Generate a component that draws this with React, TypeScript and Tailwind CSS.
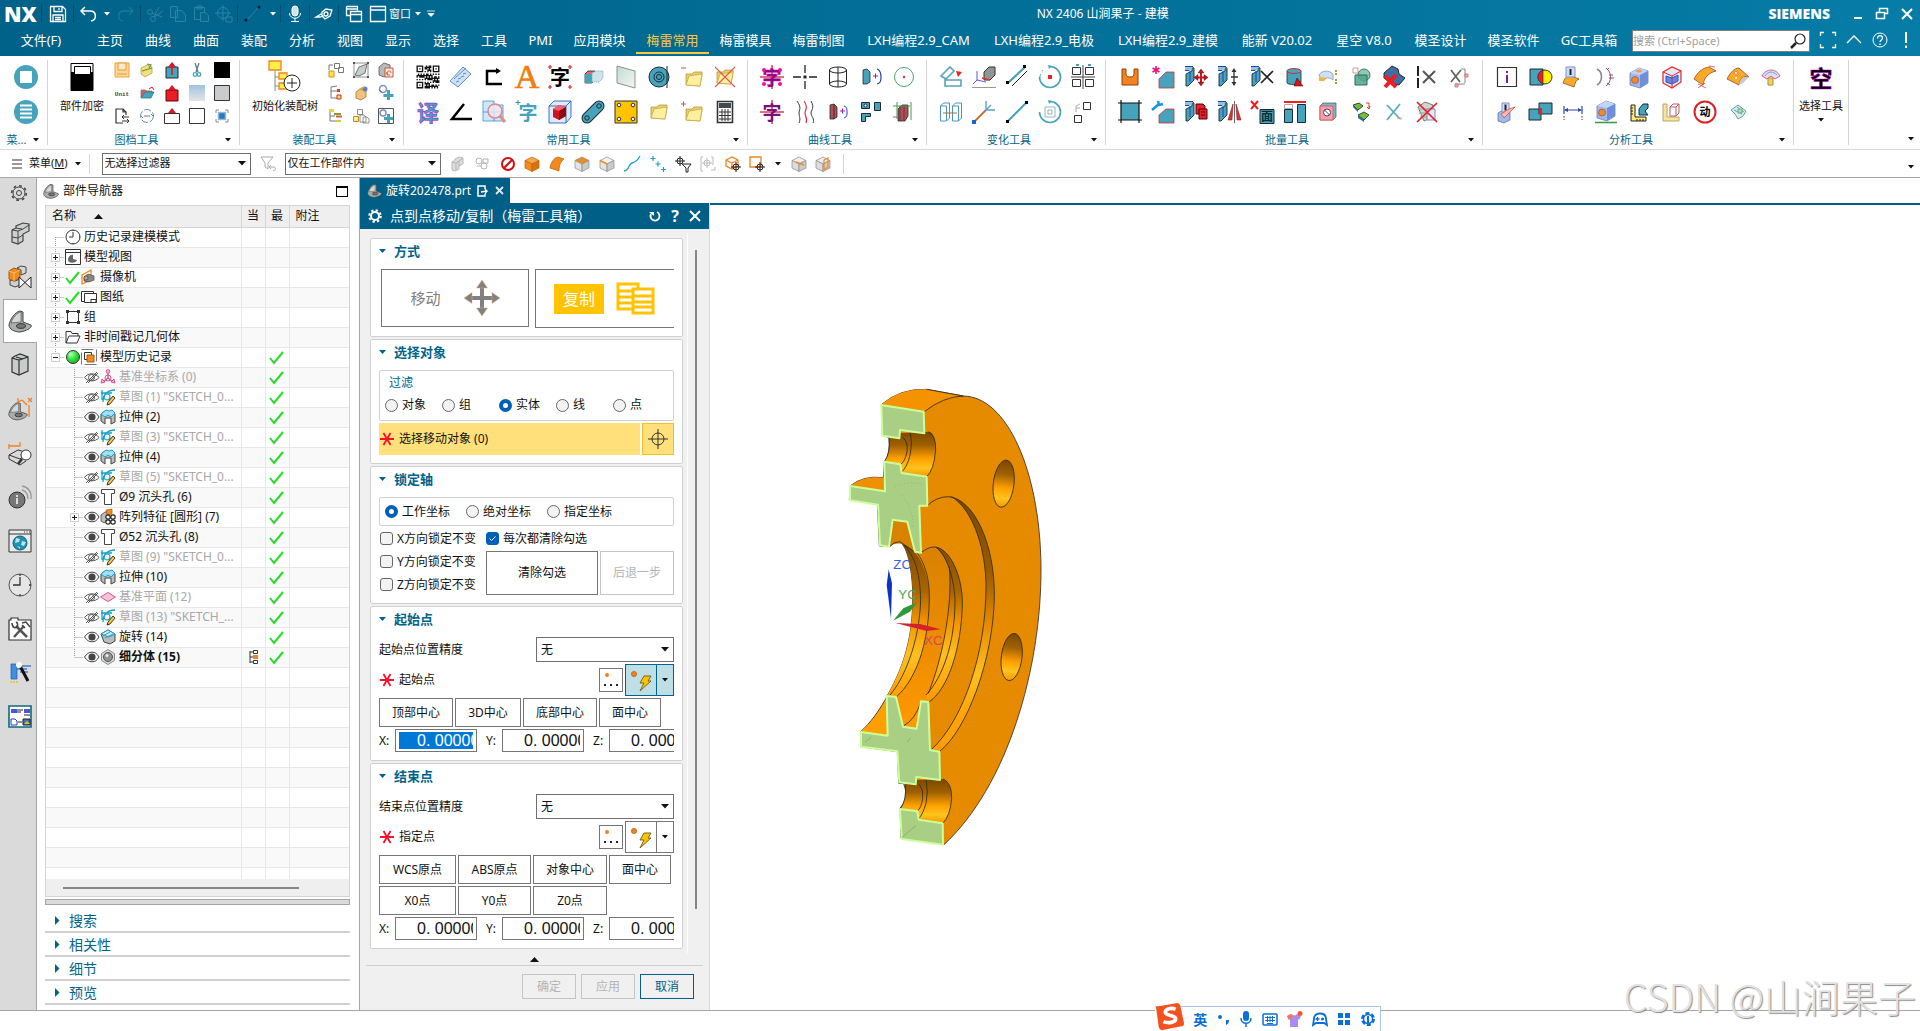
import type { ReactNode } from "react";

const TEAL = "#46a3bb";
const INK = "#1c2b33";

/* ---------- small helpers ---------- */

function Svg({ s = 24, children }: { s?: number; children: ReactNode }) {
  return (
    <svg width={s} height={s} viewBox={`0 0 ${s} ${s}`} fill="none" className="shrink-0 overflow-visible" aria-hidden="true">
      {children}
    </svg>
  );
}

function Caret({ color = "#111" }: { color?: string }) {
  return (
    <svg width="6" height="4" viewBox="0 0 6 4" className="shrink-0" aria-hidden="true">
      <path d="M0 0h6L3 3.5z" fill={color} />
    </svg>
  );
}

const T = ({ x, y, size, fill, children, stroke }: { x: number; y: number; size: number; fill: string; stroke?: string; children: string }) => (
  <text x={x} y={y} fontSize={size} fill={fill} stroke={stroke} strokeWidth={stroke ? 0.5 : undefined} fontWeight="700" textAnchor="middle" fontFamily="'Noto Sans CJK SC', sans-serif">
    {children}
  </text>
);

/* ---------- ribbon drawings ---------- */

function qrPath() {
  let d = "";
  const n = 17;
  const inFinder = (r: number, c: number) => (r < 6 && c < 6) || (r < 6 && c > 10) || (r > 10 && c < 6);
  for (let r = 0; r < n; r++)
    for (let c = 0; c < n; c++) if (!inFinder(r, c) && (r * 7 + c * 11 + r * c * 5 + ((r ^ c) & 3)) % 5 < 3) d += `M${c} ${r}h1v1h-1z`;
  for (const [x, y] of [[0, 0], [12, 0], [0, 12]]) d += `M${x} ${y}h5v5h-5zM${x + 1} ${y + 1}v3h3v-3zM${x + 2} ${y + 2}h1v1h-1z`;
  return d;
}

const folder = (x: number, y: number) => (
  <>
    <path d={`M${x} ${y + 14}V${y + 3}h6l2 -2h8v3l-2 11z`} fill="#e9cf6a" stroke="#b99a3a" strokeWidth=".8" />
    <path d={`M${x} ${y + 14}l3-9 13-2-2 12z`} fill="#fff0a0" stroke="#c9a94a" strokeWidth=".8" />
  </>
);

const block = (
  <>
    <path d="M2 9l6-3V2l2 1v12l-6 6H2z" fill={TEAL} stroke={INK} strokeWidth=".9" />
    <path d="M1 2h8L6 6H1z" fill="#8dc6d6" />
    <path d="M1 1.500h8M1 5.500h4M6 6v11" stroke="#2440b8" strokeWidth="1" />
  </>
);

const cube = (fill: string, top: string, side: string, line: string) => (
  <>
    <path d="M3 8l9-5 9 3v12l-8 5-10-3z" fill={fill} stroke={line} strokeWidth=".8" />
    <path d="M3 8l9-5 9 3-8 4z" fill={top} />
    <path d="M13 10l8-4v12l-8 5z" fill={side} />
  </>
);

const smallFile: [string, ReactNode][] = [
  ["保存", <><path d="M1 1h14v14H1z" fill="#fbd79b" stroke="#f0a030" /><path d="M4 1h8v7H4zM3 12h10" stroke="#e59a3a" fill="#fde9c4" /></>],
  ["打开", <><path d="M2 6l6-3 5 2v6l-7 4-4-3z" fill="#f3df7e" stroke="#b7a146" strokeWidth=".8" /><path d="M8 2l4 1-2 3M3 9l10-3" stroke="#5d9a3d" strokeWidth="1.2" /></>],
  ["导出", <><path d="M2 5h12v11H2z" fill={TEAL} stroke={INK} /><path d="M8 13V4" stroke="#e81123" strokeWidth="1.6" /><path d="M8 0l4 5H4z" fill="#e81123" /></>],
  ["剪切", <><path d="M6 1l3 9M10 1L7 10" stroke="#5b7083" strokeWidth="1.2" /><circle cx="6" cy="12.500" r="1.800" stroke={TEAL} strokeWidth="1.300" /><circle cx="10" cy="12.500" r="1.800" stroke={TEAL} strokeWidth="1.300" /></>],
  ["黑色", <path d="M0 0h16v16H0z" fill="#000" />],
  ["单位", <text x="8" y="10.500" fontSize="6" textAnchor="middle" fill="#444" fontWeight="700" fontFamily="'Liberation Mono', monospace">Unit</text>],
  ["打开文件夹", <><path d="M2 13V5h4l2 1h5v3" fill="#e05b4b" stroke="#6e7f88" strokeWidth=".8" /><path d="M2 13l4-6h9l-3 6z" fill={TEAL} stroke="#35788b" strokeWidth=".8" /><path d="M10 4l3-2 2 3" stroke="#e81123" /></>],
  ["红色导出", <><path d="M2 5h12v11H2z" fill="#ed1c24" stroke="#5a0a0c" /><path d="M8 0l4 5H4z" fill="#e81123" /></>],
  ["渐变背景", <path d="M0 0h16v16H0z" fill="url(#gradBg)" />],
  ["灰色背景", <path d="M.5.5h15v15H.5z" fill="#c9cbce" stroke="#333" />],
  ["移出", <><path d="M9 15H2V1h7l3 3v3M9 1v3h3" stroke="#333" strokeWidth="1.200" /><path d="M15 9H8l2-2M8 9l2 2M8 13h7l-2-2M15 13l-2 2" stroke="#333" /></>],
  ["替换", <><circle cx="8" cy="8" r="6.500" stroke="#5b8fb0" strokeDasharray="7 2" /><path d="M2 8l2 2M14 8l-2-2M5 8h6" stroke="#777" /></>],
  ["上传", <><path d="M.5 5.500h15v10H.5z" fill="#fff" stroke="#333" /><path d="M8 0l4 5H4z" fill="#e81123" /></>],
  ["白色背景", <path d="M.5.5h15v15H.5z" fill="#fff" stroke="#333" />],
  ["适合窗口", <><path d="M2 5V2h3M11 2h3v3M14 11v3h-3M5 14H2v-3" stroke="#888" /><path d="M4.500 4.500h7v7h-7z" fill="#2d79b8" stroke="#8fb7d6" strokeWidth="1.500" /></>],
];

const smallAsm: [string, ReactNode][] = [
  ["添加组件", <><path d="M6.500 1.500h5v5h-5zM10.500 5.500h5v5h-5z" stroke="#777" /><path d="M1 8V3h4" stroke="#777" /><path d="M1 9h5v6H1z" fill="#ffe34d" stroke="#e08a1a" /></>],
  ["变换组件", <><path d="M1 1h14v14H1z" stroke="#777" strokeWidth=".8" /><path d="M2 13l4-8 8-3-2 9-6 3z" fill="#c5d0cd" stroke="#555" strokeWidth=".8" /><path d="M0 0h2v2H0zM14 0h2v2h-2zM14 14h2v2h-2zM0 14h2v2H0z" fill="#555" /></>],
  ["替换组件", <><path d="M1 5l5-4 6 2v9l-6 3-5-2z" fill="#b9b9b9" stroke="#555" strokeWidth=".8" /><path d="M7 6h8v9H7z" fill="#ffe9e2" stroke="#c05a3a" /><path d="M9 12c0-4 4-4 4-1M9 10l0 3h3" stroke="#d2532a" /></>],
  ["树", <><path d="M3 2v11h6M3 6h6M3 2l6-1" stroke="#777" /><path d="M9 4h3v3H9z" fill="#e33" /><path d="M9 10h4v4H9z" fill="#ffe34d" stroke="#c33" /></>],
  ["新建父", <><path d="M3 7l4-3 6 2v6l-5 3-5-2z" fill="#f0c27c" stroke="#a47431" strokeWidth=".8" /><circle cx="12" cy="4" r="2.500" fill="#5e7fbd" /><path d="M6 5l5-3" stroke="#e8a23a" strokeWidth="1.500" /></>],
  ["加件一", <><circle cx="5" cy="4" r="3.500" stroke="#7f8fb8" strokeWidth="1.500" /><path d="M1 5l3 2" stroke="#6c5bb8" /><path d="M10.500 5v10M5.500 10.500h10" stroke={TEAL} strokeWidth="3" /></>],
  ["树二", <><path d="M2 2v11h5M2 8h5" stroke="#777" /><path d="M1 1h5v3H1z" fill="#e7d23f" /><path d="M6 5h7v2H6z" fill="#8a9a36" /><path d="M8 7.500h6v2H8z" fill="#c64" /><path d="M7 12h6v2H7z" fill="#d9c93c" /></>],
  ["复制组件", <><path d="M4.500 1.500h5v5h-5z" stroke="#888" /><path d="M.5 8.500h5v5h-5z" fill="#ffef9a" stroke="#b98b1a" /><path d="M7 7h4l2 2v5H7zM10 9h4l2 2v4h-6z" fill="#fff" stroke="#777" strokeWidth=".8" /></>],
  ["加件二", <><path d="M.5.5h15v15H.5z" stroke="#555" /><circle cx="5" cy="5" r="3" stroke="#7f8fb8" strokeWidth="1.500" /><path d="M10.500 6v9M6 10.500h9" stroke={TEAL} strokeWidth="3" /></>],
];

const common: [string, ReactNode][] = [
  ["二维码", <g transform="translate(0.500 0.500) scale(1.350)"><path d={qrPath()} fill="#111" fillRule="evenodd" /></g>],
  ["测量", <><path d="M1 16L14 2l8 7L9 22z" fill="#cfe1f5" stroke="#5b8fc9" /><path d="M5 14l12-11M7 17l3-1M9 14l3-1M12 12l3-1M14 9l3-1" stroke="#5b8fc9" /></>],
  ["路径", <><path d="M17 6H5v13h15" stroke="#000" strokeWidth="2.500" /><path d="M14 3l5 3-5 3z" fill="#000" /></>],
  ["文字", <text x="12" y="23" fontSize="34" fill="#f07d0e" stroke="#f07d0e" strokeWidth=".6" textAnchor="middle" fontFamily="'Liberation Serif', serif">A</text>],
  ["字阵", <><T x={12} y={20} size={20} fill="#000">字</T><path d="M2 0v4M0 2h4M22 0v4M20 2h4M2 20v4M0 22h4M22 20v4M20 22h4" stroke="#d8232a" strokeWidth="1.200" /></>],
  ["分割体", <><path d="M4 9l3-3h7v9l-3 3H4z" fill="#e46a6a" stroke={INK} strokeWidth=".8" /><path d="M4 9h7v9H4z" fill={TEAL} /><path d="M11 8l4-2h7v7l-4 4h-7z" fill="#cfe3ea" stroke="#7aa4b2" strokeDasharray="1 1" /></>],
  ["平面", <path d="M3 1l18 5v17L3 18z" fill="url(#gradPlane)" stroke="#8a938f" />],
  ["圆片", <><circle cx="12" cy="12" r="10" fill={TEAL} stroke={INK} /><circle cx="12" cy="12" r="5" stroke={INK} /><circle cx="12" cy="12" r="2.500" stroke={INK} /><path d="M20 1v22" stroke={INK} /></>],
  ["减文件夹", <><path d="M1 3h5" stroke="#c55" />{folder(6, 6)}</>],
  ["删除文件夹", <>{folder(4, 4)}<path d="M2 2l20 20M22 2L2 22" stroke="#e0584a" strokeWidth="1.100" /></>],
  ["翻译", <T x={12} y={21} size={22} fill="#4a9bd0" stroke="#a010b0">译</T>],
  ["角度", <path d="M15 4L3 19h20" stroke="#000" strokeWidth="2.500" />],
  ["缩放", <><path d="M1 1h11v4h9v16H1zM1 12h20M12 5v16" fill="#cfe6fb" stroke="#3a8fe0" strokeWidth=".8" /><circle cx="13" cy="11" r="7" fill="#f6e6ee" fillOpacity=".8" stroke="#d98a8a" strokeWidth="1.500" /><path d="M18 16l5 6" stroke="#e58a8a" strokeWidth="3" /></>],
  ["字加", <><T x={13} y={20} size={19} fill={TEAL}>字</T><path d="M3 0v5M.5 2.500h5" stroke="#3b8da6" /></>],
  ["包容体", <><path d="M1 6l5-5h17v16l-5 6H1zM1 6h17v17M18 6l5-5" fill="#bcd6ff" fillOpacity=".5" stroke="#2e63b8" strokeWidth=".9" /><path d="M5 9l6-4 7 2v9l-7 4-6-3z" fill="#d3121f" /><path d="M5 9l6-4 7 2-7 4z" fill="#f0626b" /><path d="M11 11l7-4v9l-7 4z" fill="#8d0912" /></>],
  ["连杆", <><path d="M6 18L18 6" stroke={INK} strokeWidth="11" strokeLinecap="round" /><path d="M6 18L18 6" stroke={TEAL} strokeWidth="9" strokeLinecap="round" /><circle cx="18" cy="6" r="2.200" stroke={INK} /><circle cx="6" cy="18" r="2.200" stroke={INK} /></>],
  ["模板", <><path d="M1 1h22v22H1z" fill="#ffc300" stroke="#333" /><g fill="#fff" stroke="#333"><circle cx="5" cy="5" r="1.800" /><circle cx="19" cy="5" r="1.800" /><circle cx="5" cy="19" r="1.800" /><circle cx="19" cy="19" r="1.800" /></g></>],
  ["文件夹", folder(4, 4)],
  ["加文件夹", <><path d="M1 4h5M3.500 1.500v5" stroke="#c55" />{folder(6, 6)}</>],
  ["计算器", <><path d="M4.500 1.500h15v21h-15z" fill="#fff" stroke="#333" strokeWidth="1.600" /><path d="M6 3h12v5H6z" fill="#3d4b52" /><path d="M6 12h12M6 15.500h12M6 19h12M9 9v12M12 9v12M15 9v12" stroke="#333" /></>],
];

const curve: [string, ReactNode][] = [
  ["字曲线", <><path d="M0 12h24M12 0v24" stroke="#d8434a" strokeWidth="1.500" /><T x={12} y={20} size={19} fill="#7a1080" stroke="#e000b0">字</T><g fill="#f0109a"><circle cx="4" cy="5" r="2" /><circle cx="20" cy="5" r="2" /><circle cx="4" cy="19" r="2" /><circle cx="20" cy="19" r="2" /></g></>],
  ["中心线", <><path d="M0 12h8M16 12h8M12 0v8M12 16v8" stroke="#222" strokeWidth="1.300" /><path d="M10.500 10.500h3v3h-3z" fill="#222" /></>],
  ["圆柱线", <><ellipse cx="12" cy="5" rx="8.500" ry="3" stroke="#222" /><ellipse cx="12" cy="19" rx="8.500" ry="3" stroke="#222" /><path d="M3.500 5v14M20.500 5v14M12 2v20" stroke="#222" /></>],
  ["投影", <><path d="M4 5l4-1 3 3v10l-3 2H4z" fill={TEAL} stroke={INK} strokeWidth=".8" /><path d="M14 11h5M16.500 8.500v5" stroke="#a020a0" /><path d="M18 4c3 1 4 3 4 8s-1 6-4 7" stroke="#223fb0" strokeWidth="1.200" /></>],
  ["圆心", <><circle cx="12" cy="12" r="9.500" stroke="#4ca56a" /><circle cx="12" cy="12" r="1.200" fill="#d33" /></>],
  ["字线", <><path d="M0 12h24M12 0v24" stroke="#d8434a" strokeWidth="1.500" /><T x={12} y={20} size={19} fill="#7a1080">字</T></>],
  ["偏置曲线", <><path d="M4 1c5 7 2 9 2 12s2 6 0 10M18 1c4 7 0 9 0 12s4 6 2 10" stroke="#333" /><path d="M11 1c5 7 1 9 1 12s3 6 1 10" stroke="#e0303a" strokeWidth="1.200" /></>],
  ["抽取", <><path d="M4 5l4-1 3 3v10l-3 2H4z" fill="#b84c56" stroke={INK} strokeWidth=".8" /><path d="M8 4v15" stroke="#333" /><path d="M14 11h5M16.500 8.500v5" stroke="#a020a0" /><path d="M18 6c3 1 3 3 3 6s0 5-3 6" stroke="#223fb0" /></>],
  ["排布", <g fill={TEAL} stroke={INK}><path d="M2.500 2.500h8v6h-8zM15.500 2.500h6v8h-6zM2.500 13.500h9v3h-5v5h-4z" /><circle cx="6.500" cy="5.500" r="1.500" fill="#fff" /></g>],
  ["包络", <><path d="M6 9l4-4h6v11l-3 5H6z" fill="#b84c56" stroke={INK} strokeWidth=".8" /><path d="M8 6v15M12 5v15" stroke="#444" /><path d="M1 6h17M5 2v17M19 2v18M1 17h4" stroke="#3f9a4a" /></>],
];

const change: [string, ReactNode][] = [
  ["旋转对齐", <><path d="M2 11l9-9 4 4-8 8zM6 21v-6h16v6z" fill="#fff" stroke="#5aa3b8" strokeWidth="1.600" /><path d="M17 6l6 1-4 5z" fill="#e22" /></>],
  ["坐标移动", <><path d="M12 7l5-5h6v8l-5 5h-6z" fill="#8f9693" stroke="#333" /><path d="M5 6v9l9 2M5 15l-4 4" stroke="#5b5bd8" /><path d="M10 13l8 2" stroke="#d33" strokeWidth="1.500" /><path d="M0 22.500h24" stroke="#999" /></>],
  ["平行线", <><path d="M3 18L20 2" stroke="#111" strokeWidth="1.300" /><path d="M3 18L20 2" stroke={TEAL} strokeWidth="2" /><path d="M7 21L22 6" stroke="#222" /><path d="M1 16h3v3H1zM18 0h3v3h-3z" fill="#000" /></>],
  ["旋转", <><path d="M12 1.500A10.500 10.500 0 1 1 1.500 12" stroke={TEAL} strokeWidth="1.600" /><path d="M2 12A10.500 10.500 0 0 1 5 5" stroke={TEAL} strokeDasharray="3 3" /><path d="M10 0l4 1-3 3z" fill={TEAL} /><path d="M10 10h4v4h-4z" fill="#e22" /></>],
  ["阵列", <><path d="M12 0v24M0 12h24" stroke="#444" /><g stroke="#333" fill="#fff"><path d="M1.500 2.500h8v7h-8zM14.500 2.500h8v7h-8zM1.500 14.500h8v7h-8zM14.500 14.500h8v7h-8z" /></g><path d="M5 0h3M17 0h3" stroke={TEAL} strokeWidth="2" /></>],
  ["平移体", <><path d="M1.500 6l3-3h6v15l-3 3h-6zM13.500 6l3-3h6v15l-3 3h-6zM1.500 6h6v15M13.500 6h6v15" fill="#fff" stroke="#4a93c4" /><path d="M4 13h14" stroke="#a86a3a" /></>],
  ["点到点", <><path d="M2 22L14 10" stroke="#c0712a" strokeWidth="1.800" /><path d="M14 10V1M14 10h9M14 10l5-5" stroke="#5aa3d0" strokeWidth="1.400" /><path d="M0 20h4v4H0z" fill="#1464d8" /></>],
  ["两点线", <><path d="M3 21L21 3" stroke={TEAL} strokeWidth="2" /><path d="M1 20h3v3H1zM20 1h3v3h-3z" fill="#000" /></>],
  ["旋转框", <><path d="M12 1.500A10.500 10.500 0 1 1 1.500 12" stroke={TEAL} strokeWidth="1.600" /><path d="M10 0l4 1-3 3z" fill={TEAL} /><path d="M7 7h10v10H7z" stroke="#8fb9c6" /><path d="M10 10h4v4h-4z" stroke="#aaa" /></>],
  ["缩放移动", <><path d="M12.500 2.500h7v7h-7zM3.500 15.500h7v7h-7z" stroke="#333" fill="#fff" /><path d="M5 12V6l4-2M5 8l4 0" stroke="#aaa" /></>],
];

const batch: [string, ReactNode][] = [
  ["凹槽", <path d="M4 4h4v5c0 4 8 4 8 0V4h4v16H4z" fill="#f58220" stroke="#8a4208" />],
  ["倒角星", <><path d="M8 23V14l7-7h8v16z" fill={TEAL} stroke="#c33" strokeWidth=".8" /><path d="M5 1v8M1.500 3l7 4M8.500 3l-7 4" stroke="#f0107a" strokeWidth="1.600" /></>],
  ["移动面", <>{block}<path d="M17 6v13M11 12.500h12" stroke="#c21820" strokeWidth="2" /><path d="M17 4l3 4h-6zM17 21l3-4h-6zM10 12.500l4-3v6zM24 12.500l-4-3v6z" fill="#c21820" stroke="#500" strokeWidth=".4" /></>],
  ["拉伸面", <>{block}<path d="M17 5v15M14 12h7" stroke="#333" strokeWidth="1.300" /><path d="M17 3l2.500 4h-5zM17 21l2.500-4h-5z" fill="#333" /></>],
  ["删除面", <>{block}<path d="M11 6l12 12M23 6L11 18" stroke="#222" strokeWidth="1.700" /></>],
  ["缸体", <><path d="M4 6v12c2 2 10 2 14 0V6z" fill={TEAL} stroke={INK} strokeWidth=".8" /><ellipse cx="11" cy="6" rx="7" ry="2.500" fill={TEAL} stroke="#c33" /><path d="M14 13l6 8h-9z" fill="#d8121c" stroke="#400" strokeWidth=".5" /></>],
  ["弯曲", <><path d="M3 10c3-5 10-5 14-1v6c-4-3-7-3-11 1z" fill="#cfe0f2" stroke="#93a9c4" /><path d="M3 12v4h5l3-3" fill="#f0b347" /><path d="M20 5v5M20 14v5" stroke="#d88a3a" strokeWidth="2" strokeDasharray="2 1" /></>],
  ["布尔", <><path d="M4 3h5v5H4z" stroke="#d99" /><circle cx="15" cy="10" r="6" fill="#8fc9b0" stroke="#3a7a6a" /><path d="M6 10h12v10H6z" fill="#4ea38e" fillOpacity=".85" stroke="#2f6a5a" /></>],
  ["删除体", <><path d="M2 8l8-7 6 3 1 5 6 4-6 7-9-2-6-5z" fill="#3f6f9e" stroke="#182a3c" /><path d="M3 11l11 11M14 10L3 22" stroke="#ef1c24" strokeWidth="4" /></>],
  ["对称", <><path d="M3 1v22" stroke="#222" strokeWidth="2" strokeDasharray="10 2" /><path d="M8 6l12 12M20 6L8 18" stroke="#555" strokeWidth="2" /></>],
  ["复制阵列", <><path d="M3 5l9 12M13 5L3 17" stroke="#666" strokeWidth="1.800" /><path d="M13 4h4v14M7 19h10" stroke="#888" /><path d="M17 9h3v3h-3zM7 19h3v3H7z" fill="#f3b0b0" stroke="#d55" strokeWidth=".7" /></>],
  ["外框", <><path d="M3 3h18v17H3z" fill={TEAL} /><path d="M3 0v23M21 0v23M0 3h24M0 20h24" stroke="#111" strokeWidth="1.200" /></>],
  ["倒角修", <><path d="M8 23V15l7-6h8v14z" fill={TEAL} stroke="#c33" strokeWidth=".8" /><path d="M1 10l7-6M7 1l1 4 4-1" stroke="#1496e0" strokeWidth="2.500" /></>],
  ["面复制", <>{block}<path d="M12 4h7l2 2v8h-9z" fill="#e2222c" stroke="#500" /><path d="M15 9h8v10h-8z" fill="#e2222c" stroke="#500" /><path d="M17 12h4M17 15h4" stroke="#500" /></>],
  ["面镜像", <>{block}<path d="M16 4l-5 16h4zM19 4l5 16h-4z" fill="#d23a42" stroke="#700" strokeWidth=".5" /><path d="M17.500 1v22" stroke="#666" /></>],
  ["删面", <><path d="M1 1l7 8M8 1L1 9" stroke="#ef1c24" strokeWidth="2" /><path d="M10 9.500h14v14H10z" fill={TEAL} stroke={INK} /><T x={17} y={21} size={12} fill="#0a2a33">面</T></>],
  ["对齐面", <><path d="M1 2h22" stroke="#e22" strokeWidth="2" /><path d="M1.500 9.500h8v13h-8zM14.500 4.500h8v18h-8z" fill={TEAL} stroke={INK} /><path d="M1.500 4.500h8v4h-8z" stroke="#aaa" fill="#fff" /></>],
  ["面孔", <><path d="M4 6l3-3h13v14l-3 3H4z" fill="#7fb6c6" stroke="#555" strokeWidth=".7" /><path d="M4 6h13v14H4z" fill="#f6a0aa" stroke="#c55" strokeWidth=".8" /><circle cx="11" cy="12.500" r="3.500" fill="#fff" stroke="#446" /><path d="M8.500 10l5 5" stroke="#446" /></>],
  ["替换体", <><path d="M4 5l6-2 4 3-5 4zM9 15l6-3 5 3-5 5z" fill="#6fbf3a" stroke="#222" strokeWidth=".8" /><path d="M4 5l5 5v2L4 7zM9 15l6 5v2l-6-4z" fill="#2f6a9a" /><path d="M17 3h3v5M18 7l2 2 1-3" stroke="#e33" /></>],
  ["交叉", <><path d="M5 5l13 14M18 4L5 20" stroke="#5aaac0" strokeWidth="1.800" /><path d="M15 18h3M19 17v3" stroke="#d99" /></>],
  ["清除", <><path d="M3 7l7-5 8 3v12l-9 4z" fill="#cfd5d3" stroke="#777" /><path d="M4 9h13M4 13h13M5 17h11" stroke="#8a9" /><path d="M12 9h8v11h-8z" fill="#e6e6ff" stroke="#88a" /><path d="M2 2l20 20M22 3L2 22" stroke="#e81c24" strokeWidth="1.700" /></>],
];

const blueCube = cube("#9fb8f0", "#c3d4fb", "#6f8fdc", "#6f7fa8");
const analysis: [string, ReactNode][] = [
  ["信息", <><path d="M2.500 2.500h19v19h-19z" fill="#fff" stroke="#333" strokeWidth="1.200" /><path d="M12 10v8M12 6v2" stroke="#7a1fa0" strokeWidth="2" /></>],
  ["干涉", <><path d="M2 4h13v16H2z" fill={TEAL} stroke={INK} /><circle cx="17" cy="12" r="7" fill="#fff200" stroke="#333" /><path d="M15 5.300a7 7 0 0 0 0 13.400z" fill="#ef1c24" stroke="#333" strokeWidth=".7" /></>],
  ["面信息", <><path d="M2 18c2-6 5-8 8-7l8 3c-3 1-4 4-5 8z" fill="#f9a928" stroke="#a86c2c" /><path d="M5 2h9v10H5z" fill="#cfdcf6" stroke="#7f93c4" /><path d="M9.500 4v6" stroke="#223" strokeWidth="2" /></>],
  ["曲率梳", <><path d="M3 4c6 3 6 12 0 16" stroke="#888" strokeWidth="1.600" /><path d="M12 3c6 4 6 14 0 18" stroke="#e0434a" /><path d="M13 5l2-2M15 10h4M15 13h5M13 18l3 2" stroke="#46a" /></>],
  ["体孔", <>{blueCube}<circle cx="8" cy="15" r="3.500" fill="#f08a28" stroke="#8a5a4a" strokeWidth=".7" /><ellipse cx="12" cy="6" rx="3" ry="1.500" fill="#f0a050" /></>],
  ["线框", <><path d="M3 7l9-5 9 4v11l-9 6-9-5z" fill="#dfeaff" stroke="#e22" strokeWidth="1.200" /><path d="M6 11l6 2 6-3v6l-6 3-6-2z" fill="#5b8be8" stroke="#2457c8" /><path d="M12 11v11M3 7l9 4 9-5" stroke="#e22" /></>],
  ["曲面", <><path d="M1 14C4 8 9 3 16 2l7 4C15 8 11 13 10 20z" fill="#f9a928" stroke="#9a5a3a" strokeWidth=".9" /><path d="M5 19l8 4M12 18l-7 5M16 1l6 1" stroke="#c44" strokeWidth=".8" /></>],
  ["曲面点", <><path d="M1 14C4 8 8 3 13 3l10 9c-6-2-9 2-10 8z" fill="#f9a928" stroke="#9a5a3a" strokeWidth=".9" /><path d="M13 20c1-6 4-9 10-8l-6 6z" fill="#c9c9c9" /><circle cx="10" cy="8" r="1.500" fill="#fff" stroke="#a55" strokeWidth=".6" /><circle cx="10" cy="13" r="1" fill="#fff" /></>],
  ["扇面", <><path d="M3 11c4-8 14-8 18 0l-5 3-4-3-4 3z" fill="#e8d9ec" stroke="#b48" strokeWidth=".8" /><path d="M6 11c3-5 8-5 12-1" stroke="#5bb0d8" /><path d="M9 13h5v7H9z" fill="#f0d060" stroke="#b09030" /></>],
  ["体信息", <><path d="M3 13l5-3 7 2v8l-6 3-6-2z" fill="#9fb8f0" stroke="#667" strokeWidth=".7" /><path d="M7 3h7v9H7z" fill="#cfdcf6" stroke="#7f93c4" /><path d="M10.500 4.500v6" stroke="#223" strokeWidth="2" /><path d="M6 14l3 4 11-11-6 2z" fill="#f3b8b0" stroke="#c43" strokeWidth=".7" /></>],
  ["求差", <><path d="M11 3h13v11H11zM1 9h12v11H1z" fill={TEAL} stroke={INK} /><path d="M11 8h3v7h-3z" fill="#ef1c24" /></>],
  ["距离", <><path d="M3 6v8M21 6v8M4 10h16" stroke="#2f49a8" strokeWidth="1.200" /><path d="M3 10l4-2v4zM21 10l-4-2v4z" fill="#2f49a8" /><path d="M3 16v4M21 16v4" stroke="#d55" strokeDasharray="1.500 1.500" strokeWidth="1.500" /></>],
  ["体尺寸", <><g transform="translate(0 -2)">{blueCube}</g><circle cx="8" cy="12.500" r="3.500" fill="#f08a28" stroke="#8a5a4a" strokeWidth=".7" /><path d="M1 22.500h22" stroke="#3f9a4a" strokeWidth="1.600" /></>],
  ["标尺", <><path d="M4 5v16h15v-4H8V5z" fill="#ffe97a" stroke="#222" /><path d="M12 15V9l4-5h5v4l-3 3 3 4z" fill={TEAL} stroke={INK} /><path d="M4 8h2M4 11h2M4 14h2M10 21v-2M13 21v-2M16 21v-2" stroke="#222" /></>],
  ["标尺二", <><path d="M3 4v17h16v-4H7V4z" fill="#f4e4a0" stroke="#b8a560" /><path d="M10 7l3-3h6v9l-3 3h-6zM10 7h6v9M16 7l3-3" stroke="#b55a6a" /></>],
  ["动态", <><circle cx="12" cy="12" r="10.500" fill="#fff" stroke="#e02028" strokeWidth="2" /><T x={12} y={16} size={11} fill="#000">动</T></>],
  ["检查", <><path d="M5 10l7-5 8 6-3 5-5 3-3-5z" fill="#d8efe8" stroke="#5aa3b8" /><path d="M8 10l8 4M11 7l7 5" stroke="#5aa3b8" /><path d="M12 9h4v4h-4z" fill="#b9dca0" stroke="#6a8" /></>],
];

function IconGrid({ items, cls, s = 24 }: { items: [string, ReactNode][]; cls: string; s?: number }) {
  return (
    <div className={`grid ${cls}`}>
      {items.map(([name, art]) => (
        <button key={name} aria-label={name} className="flex items-center justify-center">
          <Svg s={s}>{art}</Svg>
        </button>
      ))}
    </div>
  );
}

function Group({ label, children, cls }: { label: string; children: ReactNode; cls: string }) {
  return (
    <section className="my-1 flex flex-col border-r border-[#d4d4d4]">
      <div className={`flex flex-1 ${cls}`}>{children}</div>
      <div className="-mb-[3px] flex h-4 items-center text-[11px] leading-4 text-[#00648a]">
        <span className="flex-1 text-center whitespace-nowrap">{label}</span>
        <button aria-label={`${label}选项`} className="pr-2"><Caret /></button>
      </div>
    </section>
  );
}

/* ---------- header ---------- */

const tabs: [string, string][] = [
  ["主页", "w-12"], ["曲线", "w-12"], ["曲面", "w-12"], ["装配", "w-12"], ["分析", "w-12"], ["视图", "w-12"], ["显示", "w-12"], ["选择", "w-12"], ["工具", "w-12"],
  ["PMI", "w-[45px]"], ["应用模块", "w-[73px]"], ["梅雷常用", "w-[73px]"], ["梅雷模具", "w-[73px]"], ["梅雷制图", "w-[73px]"],
  ["LXH编程2.9_CAM", "w-[127px]"], ["LXH编程2.9_电极", "w-[124px]"], ["LXH编程2.9_建模", "w-[124px]"], ["能新 V20.02", "w-[94px]"], ["星空 V8.0", "w-20"],
  ["模圣设计", "w-[73px]"], ["模圣软件", "w-[73px]"], ["GC工具箱", "w-[78px]"],
];

function QSep() {
  return <span className="h-[18px] w-px shrink-0 bg-[#004c6b]" />;
}

function QBtn({ label, children, cls }: { label: string; children: ReactNode; cls: string }) {
  return <button aria-label={label} className={`flex h-6 shrink-0 items-center justify-center ${cls}`}>{children}</button>;
}

function Header() {
  const dim = "#2f83a2";
  return (
    <header className="bg-linear-to-r from-[#006289] to-[#067ca6] text-white">
      <div className="flex h-7 items-center">
        <div className="flex h-7 items-center">
          <span className="w-[41px] pl-1 font-['Open_Sans',sans-serif] text-[21px] leading-7 font-extrabold">NX</span>
          <QSep />
          <QBtn label="保存" cls="w-[31px]"><Svg s={18}><path d="M1.500 1.500h12l3 3v12h-15zM5 1.500v5h8v-5M4 16v-6h10v6M6 12.500h6M6 14.500h6M10 3v2" stroke="#fff" strokeWidth="1.300" /></Svg></QBtn>
          <QSep />
          <QBtn label="撤销" cls="w-7"><Svg s={18}><path d="M6 2L2 6l4 4M2 6h9c7 0 7 9 1 10" stroke="#fff" strokeWidth="1.500" /></Svg></QBtn>
          <QBtn label="撤销列表" cls="w-2.5"><Caret color="#fff" /></QBtn>
          <QBtn label="重做" cls="w-7"><Svg s={18}><path d="M12 2l4 4-4 4M16 6H7c-7 0-7 9-1 10" stroke="#1f7897" strokeWidth="1.300" /></Svg></QBtn>
          <QSep />
          <QBtn label="剪切" cls="w-7"><Svg s={18}><circle cx="4" cy="7" r="2.500" stroke={dim} /><circle cx="7" cy="14" r="2.500" stroke={dim} /><path d="M6 8l10 4M8 12l5-10M8 12l9-6" stroke={dim} /></Svg></QBtn>
          <QBtn label="复制" cls="w-[18px]"><Svg s={18}><path d="M1.500 1.500h7v11h-7zM6.500 5.500h6l4 4v7h-10z" stroke={dim} fill="#05688d" /></Svg></QBtn>
          <QBtn label="粘贴" cls="w-7"><Svg s={18}><path d="M2.500 2.500h10v12h-10zM5 1h5v3H5z" stroke={dim} /><path d="M8.500 7.500h5l3 3v6h-8z" stroke={dim} fill="#05688d" /></Svg></QBtn>
          <QBtn label="选择" cls="mr-1 w-[18px]"><Svg s={18}><circle cx="8" cy="8" r="5.500" stroke={dim} /><path d="M8 0v16M0 8h16M11 12h6v5h-6z" stroke={dim} /></Svg></QBtn>
          <QSep />
          <QBtn label="直线" cls="w-7"><Svg s={18}><path d="M3 16L16 2" stroke={dim} /><circle cx="3" cy="15" r="1.500" fill="#012" /><circle cx="16" cy="2" r="1.500" fill="#012" /></Svg></QBtn>
          <QBtn label="直线列表" cls="w-3.5"><Caret color="#fff" /></QBtn>
          <QSep />
          <QBtn label="语音" cls="w-7"><Svg s={18}><rect x="6" y="1" width="6" height="10" rx="3" fill="#cfe3ea" stroke="#fff" /><path d="M3.500 8c0 7 11 7 11 0M9 13v3M5 16.500h8" stroke="#fff" /></Svg></QBtn>
          <QSep />
          <QBtn label="触控" cls="w-7"><Svg s={18}><path d="M1 12l5-3 2 2-3 1zM7 7l4-3 6 1-2 6-5 3-3-3z" stroke="#fff" strokeWidth="1.300" /><circle cx="11" cy="9" r="2" stroke="#fff" strokeWidth="1.300" /></Svg></QBtn>
          <QSep />
          <QBtn label="切换窗口" cls="w-[30px]"><Svg s={18}><path d="M1.500 1.500h11v4M1.500 1.500v9h4M1.500 4h11M5.500 6.500h11v10h-11zM5.500 9.500h11" stroke="#fff" strokeWidth="1.300" /></Svg></QBtn>
          <QBtn label="窗口" cls="gap-0.5"><Svg s={18}><path d="M1.500 1.500h15v15h-15zM1.500 5h15" stroke="#fff" strokeWidth="1.300" /></Svg><span className="mr-0.5 text-[11px]">窗口</span><Caret color="#fff" /></QBtn>
          <QBtn label="自定义" cls="w-5"><svg width="8" height="8" viewBox="0 0 8 8"><path d="M0 1h8M1 3.500h6l-3 3z" stroke="#fff" fill="#fff" strokeWidth=".8" /></svg></QBtn>
        </div>
        <h1 className="flex-1 pr-1 text-center text-xs whitespace-nowrap">NX 2406 山涧果子 - 建模</h1>
        <div className="flex items-center justify-end">
          <span className="mr-4 font-['Open_Sans',sans-serif] text-sm font-extrabold">SIEMENS</span>
          <QBtn label="最小化" cls="w-6"><Svg s={12}><path d="M2 10h8" stroke="#fff" strokeWidth="2" /></Svg></QBtn>
          <QBtn label="还原" cls="w-6"><Svg s={12}><path d="M3.500 3.500v-3h8v5h-3M.5 4.500h8v6h-8z" stroke="#fff" strokeWidth="1.500" /></Svg></QBtn>
          <QBtn label="关闭" cls="w-[26px]"><Svg s={12}><path d="M1 1l10 10M11 1L1 11" stroke="#fff" strokeWidth="2" /></Svg></QBtn>
        </div>
      </div>
      <nav className="flex h-7 text-[13px] leading-6 whitespace-nowrap">
        <a href="#file" className="mr-1 w-[82px] text-center">文件(F)</a>
        {tabs.map(([t, w]) => (
          <a key={t} href="#tab" className={t === "梅雷常用" ? "mb-0.5 w-[73px] shrink-0 border-b-2 border-[#ffc83d] text-center text-[#ffc83d]" : `${w} shrink-0 text-center`}>{t}</a>
        ))}
        <div className="ml-1 flex flex-1 items-center pb-1">
          <div className="mt-0.5 flex h-[22px] w-[178px] items-center border border-[#7d7d7d] bg-white pr-0.5">
            <input aria-label="搜索" placeholder="搜索 (Ctrl+Space)" className="w-0 flex-1 text-[11px] text-[#111] outline-none placeholder:text-[#a0a0a0]" />
            <Svg s={18}><circle cx="11" cy="7" r="5" stroke="#222" strokeWidth="1.200" /><path d="M7 11l-5 5" stroke="#222" strokeWidth="2.500" /></Svg>
          </div>
          <div className="flex flex-1 items-center justify-between pr-1.5 pl-2.5">
            <button aria-label="全屏"><Svg s={16}><path d="M.5 4V.5H4M12 .5h3.500V4M15.500 12v3.500H12M4 15.500H.5V12" stroke="#fff" strokeWidth="1.300" /></Svg></button>
            <button aria-label="收起功能区"><Svg s={16}><path d="M1 11l7-7 7 7" stroke="#fff" strokeWidth="1.300" /></Svg></button>
            <button aria-label="帮助"><Svg s={16}><circle cx="8" cy="8" r="7" stroke="#fff" /><path d="M5.500 6.500c0-4 5-3.500 5-.5 0 2-2.500 2-2.500 4M8 11.500v1.500" stroke="#fff" strokeWidth="1.300" /></Svg></button>
            <button aria-label="通知"><Svg s={16}><path d="M8 0v11M8 13.500V16" stroke="#fff" strokeWidth="2" /></Svg></button>
          </div>
        </div>
      </nav>
    </header>
  );
}

function Ribbon() {
  return (
    <div className="flex h-[94px] border-b border-[#d8d8d8] bg-white">
      <Group label="菜..." cls="w-[47px] justify-center pl-1">
        <div className="-mt-px flex flex-col items-center">
          <button aria-label="停止" className="flex h-[35px] items-center"><Svg><circle cx="12" cy="12" r="12" fill={TEAL} /><path d="M6 6h12v12H6z" fill="#fff" /></Svg></button>
          <button aria-label="列表" className="flex h-[35px] items-center"><Svg><circle cx="12" cy="12" r="12" fill={TEAL} /><path d="M6 5.500h12M6 9.500h12M6 13.500h12M6 17.500h12" stroke="#fff" strokeWidth="2" /></Svg></button>
        </div>
      </Group>
      <Group label="图档工具" cls="pl-3">
        <button className="mr-[5px] flex w-11 flex-col items-center gap-1.5 self-start pt-0.5">
          <svg width="26" height="30" viewBox="0 0 26 30"><path d="M2 1.500h22v27H2z" fill="#fff" stroke="#000" /><path d="M2 10h22v19H2z" fill="#000" /><path d="M5.500 4.500h16v8h-16z" fill="#fff" stroke="#000" /></svg>
          <span className="text-[11px] leading-4 whitespace-nowrap">部件加密</span>
        </button>
        <IconGrid items={smallFile} s={16} cls="mr-[5px] -mt-0.5 auto-rows-[23px] grid-cols-[repeat(5,25px)]" />
      </Group>
      <Group label="装配工具" cls="pl-3">
        <button className="mr-[5px] flex w-[66px] flex-col items-center gap-1 self-start">
          <Svg s={34}><path d="M1 1h12v9H1z" fill="#fff04a" stroke="#f0821e" strokeWidth="1.300" /><path d="M7 11v20M7 17h5M7 26h5" stroke="#888" /><path d="M11 13h8v6h-8zM11 23h8v6h-8z" fill="#fff04a" stroke="#f0821e" strokeWidth="1.300" /><circle cx="24" cy="23" r="8" fill="#fff" stroke="#222" /><path d="M24 18v10M19 23h10" stroke="#222" /></Svg>
          <span className="text-[11px] leading-4 whitespace-nowrap">初始化装配树</span>
        </button>
        <IconGrid items={smallAsm} s={16} cls="mr-[5px] -mt-0.5 auto-rows-[23px] grid-cols-[repeat(3,25px)]" />
      </Group>
      <Group label="常用工具" cls="pl-[7px]"><IconGrid items={common} cls="-mt-px mr-1.5 auto-rows-[35px] grid-cols-[repeat(10,33px)]" /></Group>
      <Group label="曲线工具" cls="pl-[7px]"><IconGrid items={curve} cls="-mt-px mr-1.5 auto-rows-[35px] grid-cols-[repeat(5,33px)]" /></Group>
      <Group label="变化工具" cls="pl-[7px]"><IconGrid items={change} cls="-mt-px mr-1.5 auto-rows-[35px] grid-cols-[repeat(5,33px)]" /></Group>
      <Group label="批量工具" cls="pl-[7px]"><IconGrid items={batch} cls="-mt-px mr-1.5 auto-rows-[35px] grid-cols-[repeat(11,33px)]" /></Group>
      <Group label="分析工具" cls="pl-[7px]"><IconGrid items={analysis} cls="-mt-px mr-1.5 auto-rows-[35px] grid-cols-[repeat(9,33px)]" /></Group>
      <div className="my-1 flex w-[55px] justify-center border-r border-[#d4d4d4]">
        <button className="flex flex-col items-center self-start pt-1.5">
          <Svg><T x={12} y={21} size={23} fill="#000" stroke="#c400d4">空</T></Svg>
          <span className="mt-2 mb-1 text-[11px] leading-4 whitespace-nowrap">选择工具</span>
          <Caret />
        </button>
      </div>
      <button aria-label="功能区选项" className="ml-auto self-end pr-1.5 pb-2"><Caret /></button>
    </div>
  );
}

/* ---------- selection bar ---------- */

const miniCube = (a: string, b: string, c: string, line = "#8a8a8a") => (
  <g stroke={line} strokeWidth=".7"><path d="M1 4.500L8 1l7 3.500-7 3.500z" fill={a} /><path d="M1 4.500L8 8v7.500L1 12z" fill={b} /><path d="M15 4.500L8 8v7.500l7-3.500z" fill={c} /></g>
);

const target = (x: number, y: number, c = "#222") => <g stroke={c}><circle cx={x} cy={y} r="3" /><path d={`M${x - 5} ${y}h10M${x} ${y - 5}v10`} /></g>;

const selIcons: [string, string, ReactNode][] = [
  ["选择体", "w-7", <g fill="#ddd" stroke="#aaa" strokeWidth=".8"><path d="M3 6l3-2V3l4-2 4 1v6l-4 2v3l-4 2-3-1z" /><path d="M3 6l4 1 3-2 4-3M7 7v7M10 5v5" /></g>],
  ["选择链", "w-[25px]", <g stroke="#b4b4b4"><circle cx="4" cy="5" r="3" /><circle cx="9" cy="10" r="3" /><path d="M8 3h5v4H8zM2 10h4" /></g>],
  ["重置过滤", "w-6", <><circle cx="8" cy="8" r="6" stroke="#d40f14" strokeWidth="2" /><path d="M12 4l-8 8" stroke="#d40f14" strokeWidth="2" /></>],
  ["体", "w-[25px]", miniCube("#f9a64a", "#f28a1c", "#d9730c", "#b8660f")],
  ["面", "w-[25px]", <path d="M1 12C2 6 5 2 9 1l6 2c-3 2-5 6-5 12z" fill="#f28a1c" stroke="#b8660f" strokeWidth=".8" />],
  ["顶面", "w-[25px]", miniCube("#f28a1c", "#e4e4e4", "#cacaca")],
  ["边", "w-6", <>{miniCube("#f2f2f2", "#e4e4e4", "#cacaca")}<path d="M1 4.500L8 8" stroke="#f28a1c" strokeWidth="1.500" /></>],
  ["曲线", "w-[26px]", <path d="M0 15C6 14 4 8 8 7s6-3 8-7" stroke="#1aa0c8" strokeWidth="1.300" />],
  ["点", "w-[26px]", <path d="M3 0v5M.5 2.500h5M8 5.500v5M5.500 8h5M13.500 11v5M11 13.500h5" stroke="#1aa0c8" strokeWidth="1.200" />],
  ["捕捉过滤", "w-[25px]", <>{target(5, 5)}<path d="M7 8h9l-3 4v4h-2v-4z" fill="#fff" stroke="#222" /></>],
  ["捕捉", "w-[25px]", <><path d="M3 1H1v14h2M11 1h2v8" stroke="#bbb" />{target(7, 7, "#bbb")}<path d="M15 11v3h-4" stroke="#bbb" /></>],
  ["体捕捉", "w-6", <><path d="M1 4l6-3 6 3v6l-6 3-6-3zM1 4l6 3 6-3M7 7v6" stroke="#f0821e" strokeWidth="1.300" />{target(11, 11)}</>],
  ["框捕捉", "w-6", <><path d="M1 1h11v10H1z" stroke="#f0821e" strokeWidth="1.300" />{target(11, 11)}</>],
];

const selIcons2: [string, string, ReactNode][] = [
  ["截面一", "w-6", <>{miniCube("#eee", "#ddd", "#ccc")}<path d="M5 6l8 3" stroke="#f28a1c" strokeWidth="1.500" /></>],
  ["截面二", "w-6", <>{miniCube("#eee", "#ddd", "#ccc")}<path d="M9 4l4-2v9l-4 3z" stroke="#f28a1c" strokeWidth="1.200" /></>],
];

function SelectBox({ label, value, cls }: { label: string; value: string; cls: string }) {
  return (
    <span className={`flex items-center border border-[#6f6f6f] bg-white ${cls}`}>
      <select aria-label={label} className="h-full w-0 flex-1 appearance-none pl-0.5 outline-none">
        <option>{value}</option>
      </select>
      <svg width="8" height="5" viewBox="0 0 8 5" className="pointer-events-none mr-1"><path d="M0 0h8L4 4.500z" fill="#111" /></svg>
    </span>
  );
}

function SelectionBar() {
  return (
    <div className="flex h-7 items-center border-b border-[#a5a5a5] bg-white text-[11px]">
      <button className="flex items-center gap-[7px] pl-3">
        <svg width="10" height="10" viewBox="0 0 10 10"><path d="M0 1h10M0 5h10M0 9h10" stroke="#333" /></svg>
        <span>菜单(<u>M</u>)</span>
        <Caret />
      </button>
      <span className="mr-3 ml-2 h-5 w-px bg-[#d4d4d4]" />
      <SelectBox label="类型过滤器" value="无选择过滤器" cls="h-[22px] w-[149px]" />
      <button aria-label="清除过滤器" className="flex w-[34px] justify-center"><Svg s={16}><path d="M1 1h12L8 7v6l-3-2V7z" stroke="#aaa" /><path d="M9 11h5c2 0 2 4-1 4M11 9l-2 2 2 2" stroke="#aaa" /></Svg></button>
      <SelectBox label="选择范围" value="仅在工作部件内" cls="mr-0.5 h-[22px] w-[156px]" />
      {selIcons.map(([n, w, a]) => <button key={n} aria-label={n} className={`flex shrink-0 justify-center ${w}`}><Svg s={16}>{a}</Svg></button>)}
      <button aria-label="更多捕捉" className="flex w-[18px] justify-center"><Caret /></button>
      {selIcons2.map(([n, w, a]) => <button key={n} aria-label={n} className={`flex shrink-0 justify-center ${w}`}><Svg s={16}>{a}</Svg></button>)}
      <span className="ml-2 h-5 w-px bg-[#d4d4d4]" />
      <button aria-label="工具条选项" className="mt-1.5 ml-auto pr-1.5"><Caret /></button>
    </div>
  );
}

/* ---------- resource rail ---------- */

const bracket = <><path d="M1 16C2 10 7 3 12 2l3 1v10l8 3c2 2-4 6-11 7-6 0-11-3-11-7z" fill="#a9adab" stroke="#444" /><path d="M3 14C5 8 9 4 13 3v10z" fill="#d4d7d5" stroke="#555" strokeWidth=".7" /><ellipse cx="13" cy="17" rx="4.500" ry="2.300" fill="#777" stroke="#333" /></>;

const rail: [string, ReactNode][] = [
  ["装配导航器", <><path d="M4 9l4-2V5l7-3 6 1v7l-6 3v7l-5 3-6-2z" fill="#cdd0ce" stroke="#444" strokeWidth="1.200" /><path d="M4 9l6 1 5-2 6-4M10 10v13M4 16l6 1 5-3M8 7l6 1" stroke="#444" /></>],
  ["约束导航器", <><path d="M9 3l4-2 5 1v6l-5 2V5z" fill="#d5d5d5" stroke="#444" /><path d="M2 15l5 1 5-2v6l-5 2-5-2z" fill="#cfcfcf" stroke="#444" /><path d="M1 6l5-3 6 2v8l-6 3-5-2z" fill="#f28a1c" stroke="#a35a10" /><path d="M1 6l5 2 6-3M6 8v8" stroke="#ffbe70" /><path d="M11 12v11l12-11v11z" fill="#fff" stroke="#222" /></>],
  ["部件导航器", bracket],
  ["重用库", <><path d="M4 5l3-2 5-2 8 3v14l-9 4-7-3z" fill="#c8ccca" stroke="#333" strokeWidth="1.200" /><path d="M4 5l7 2 9-3M11 7v15M8 4l7 2" stroke="#333" strokeWidth="1.200" /></>],
  ["尺寸", <><g transform="translate(0 4) scale(.82)">{bracket}</g><path d="M10 1v4l4-2M14 3l5 5M20 1l4 4M24 1l-4 4M21 8v12" stroke="#f0821e" strokeWidth="1.300" /></>],
  ["查看", <><path d="M1 14l9-5 11 3-9 6zM1 14v4l11 6 6-4" fill="#d7dad8" stroke="#333" /><circle cx="18" cy="14" r="5" fill="#fff" stroke="#333" /><path d="M14 18l-4 5" stroke="#333" strokeWidth="2.500" /><path d="M1 8V3M1 5h10M12 1v5" stroke="#f0821e" strokeWidth="1.300" /></>],
  ["信息", <><circle cx="9" cy="15" r="8" fill="#777" stroke="#333" /><path d="M9 13v6M9 10v2" stroke="#fff" strokeWidth="1.500" /><path d="M14 5c4 1 6 4 6 9M14 1c6 1 10 6 9 13" stroke="#999" strokeWidth="1.300" /></>],
  ["网页", <><path d="M1 1h22v22H1z" fill="#e9ecea" stroke="#333" /><path d="M1 5h22M16 3h1M18.500 3h1M21 3h1" stroke="#333" /><circle cx="12" cy="14" r="7" fill="#1f8fb4" stroke="#10607c" /><path d="M8 9l4 1-1 3-4 1zM14 12l4 1-2 4-3-1zM9 17l3 1v2" fill="#bfe3ee" /></>],
  ["历史", <><circle cx="12" cy="12" r="11" fill="#e6e6e6" stroke="#555" /><path d="M12 4v8H5M12 1v2M12 21v2M21 12h2" stroke="#333" strokeWidth="1.300" /></>],
  ["工具", <><path d="M3 1h7v2h13v20H1V3h2z" fill="#fff" stroke="#333" strokeWidth="1.200" /><path d="M6 20L16 9M8 9l11 11" stroke="#555" strokeWidth="2.500" /><path d="M4 6c0 5 4 6 6 3M8 5c2 1 2 3 1 5M14 6l4-1 4 5M14 8l3 3" stroke="#444" strokeWidth="1.500" /></>],
  ["向导", <><path d="M3 3h6v15H3z" fill="#3f8fe0" stroke="#1a58b0" strokeWidth=".7" /><path d="M10 5h13M9 8h10M12 11h8" stroke="#4a7fd0" strokeWidth="1.500" /><path d="M12 5l8 15" stroke="#111" strokeWidth="3" /><circle cx="11" cy="4" r="3" fill="#fff" /><path d="M2 21l8 0" stroke="#f0c93a" strokeWidth="2" strokeDasharray="2 1" /></>],
  ["流程", <><path d="M1 1h22v21H1z" fill="#fff" stroke="#0c6a7a" strokeWidth="1.600" /><path d="M3 4h6v4H3zM16 4h6v4h-6z" fill="#4a55d8" /><path d="M9 5h6M9 7h4M10 17h4M16 10h6" stroke="#222" /><path d="M3 14h4l2 2v4H3z" fill="#fff" stroke="#2c38c8" /><path d="M15 14h7v6h-7z" fill="#4a6fb0" stroke="#222" /><path d="M16 19l3-3 3 3z" fill="#c9c93a" /></>],
];

function Rail() {
  return (
    <aside className="flex w-[37px] shrink-0 flex-col bg-[#dadada] pb-2 shadow-[inset_-1px_0_0_#a5a5a5]">
      <button aria-label="设置" className="flex h-[33px] items-center justify-center pb-1">
        <Svg s={18}><circle cx="9" cy="9" r="6" stroke="#444" /><circle cx="9" cy="9" r="2.500" stroke="#444" /><circle cx="9" cy="9" r="7.300" stroke="#444" strokeWidth="1.600" strokeDasharray="2.800 2.900" /></Svg>
      </button>
      {rail.map(([n, a]) => (
        <button key={n} aria-label={n} className={n === "部件导航器" ? "ml-[3px] flex h-11 items-center border-y border-l border-[#a5a5a5] bg-white pl-1" : "ml-1 flex h-11 items-center pl-1"}>
          <Svg>{a}</Svg>
        </button>
      ))}
    </aside>
  );
}

/* ---------- part navigator ---------- */

const art: Record<string, ReactNode> = {
  clock: <><circle cx="8" cy="8" r="7" fill="#fff" stroke="#333" /><path d="M8 3v5H4M8 1v1M8 14v1M14 8h1" stroke="#333" /></>,
  view: <><path d="M.5.5h15v15H.5zM.5 3.500h15" fill="#fff" stroke="#333" /><path d="M3 11c0-3 3-6 5-5v4l4 1c0 3-9 4-9 0z" fill="#666" /></>,
  camera: <><path d="M1 6l9-5v10l-9 4z" fill="#fff" stroke="#f0821e" strokeWidth="1.300" /><path d="M3 8l4-3 6 2v4l-5 2-5-1z" fill="#888" stroke="#444" strokeWidth=".7" /><circle cx="5" cy="9" r="2" fill="#c9a58a" stroke="#444" strokeWidth=".7" /></>,
  sheet: <><path d="M.5 2.500h12v10H.5z" fill="#fff" stroke="#333" /><path d="M3.500 4.500h12v9h-12z" fill="#fff" stroke="#333" /><path d="M10 10.500h5v3M10 10v3" stroke="#333" /></>,
  group: <><path d="M2.500 2.500h11v11h-11z" fill="#fff" stroke="#333" /><path d="M1 1h3v3H1zM12 1h3v3h-3zM1 12h3v3H1zM12 12h3v3h-3z" fill="#333" /></>,
  folder: <path d="M1 14V2.500h5l1 2h6V7M1 14l3-7h11l-3 7z" fill="#fff" stroke="#333" />,
  history: <><path d="M.5.5h15v15H.5z" fill="#fff" stroke="#777" strokeDasharray="12 3" /><path d="M3.500 3.500h7v7h-7z" stroke="#333" /><path d="M6 6h7v7H6z" fill="#f28a1c" stroke="#a35a10" /></>,
  csys: <><path d="M8 9V3M8 9l-5 4M8 9l5 4" stroke="#d7568f" strokeWidth="1.300" /><circle cx="8" cy="2.500" r="1.800" fill="#f7b6d0" stroke="#d7568f" /><path d="M1 14l1-4 3 3zM15 14l-1-4-3 3z" fill="#f7b6d0" stroke="#d7568f" /><circle cx="8" cy="9" r="3" stroke="#d7568f" /></>,
  sketch: <><path d="M1 4h11M2 1v10M3 13c0-8 5-12 12-12" stroke="#1aa0c8" strokeWidth="1.300" /><circle cx="7" cy="8" r="3" stroke="#1aa0c8" strokeWidth="1.200" /><path d="M13 7l-5 6-1 3 3-1 5-6z" fill="#ffc93a" stroke="#222" strokeWidth=".9" /></>,
  extrude: <><path d="M1 5l4-3 3 2 4-2 3 3v8l-4 2V9H5v6l-4-3z" fill="#b9bdbb" stroke="#444" /><path d="M1 5l5-4 3 1 3-1 3 3-4 4-3-2-3 2z" fill="#a6dff0" stroke="#1aa0c8" /></>,
  hole: <path d="M1.500.5h13v4h-3v11h-7v-11h-3z" fill="#fff" stroke="#444" />,
  pattern: <><path d="M1 6l4-3h3v8l-4 3-3-2z" fill="#b9bdbb" stroke="#444" strokeWidth=".8" /><path d="M6 1l6-1v5l-5 1z" fill="#f28a1c" stroke="#a35a10" strokeWidth=".7" /><g fill="#fff" stroke="#222" strokeWidth="1.200"><circle cx="8" cy="8" r="2.200" /><circle cx="13" cy="8" r="2.200" /><circle cx="8" cy="13" r="2.200" /><circle cx="13" cy="13" r="2.200" /></g></>,
  plane: <path d="M.5 8L8 3.500 15.500 8 8 12.500z" fill="#f7c3d8" stroke="#d7568f" />,
  revolve: <><path d="M1 5l7-4 7 4v7l-5 3-6-2z" fill="#b9bdbb" stroke="#444" /><path d="M1 5l7-4 7 4-6 3z" fill="#d8ecf2" stroke="#1aa0c8" /><path d="M3 7l7-4M5 9l8-4" stroke="#1aa0c8" /></>,
  subdiv: <><path d="M8 .5l6.500 4v7L8 15.500l-6.500-4v-7z" fill="#dcdcdc" stroke="#888" /><circle cx="8" cy="8" r="4.500" fill="#8f9392" stroke="#555" /><circle cx="7" cy="6.500" r="1.500" fill="#eee" /></>,
  tick: <path d="M1 9l4 5L14 3" stroke="#22dd22" strokeWidth="2" />,
  ball: <circle cx="8" cy="8" r="6.500" fill="url(#ballG)" stroke="#333" />,
  eye: <><path d="M.5 8C3 4.500 5 3.200 8 3.200S13 4.500 15 8C13 11.500 11 12.800 8 12.800S3 11.500.5 8z" fill="#fff" stroke="#444" /><circle cx="8" cy="8" r="3.600" fill="#444" /></>,
  eyeOff: <><path d="M.5 8.500C4 3.500 11.500 3.500 15 8.500 11.500 13 4 13 .5 8.500z" stroke="#555" /><circle cx="7.500" cy="8.500" r="3" stroke="#555" /><path d="M2 14L13 3M4 14L14 4" stroke="#555" /></>,
};

type Row = { d: 1 | 2; icons: string[]; name: string; exp?: "+" | "-"; first?: boolean; last?: boolean; dim?: boolean; bold?: boolean; done?: boolean };
const sk = (n: string, s = "SKETCH_0..."): Row => ({ d: 2, icons: ["eyeOff", "sketch"], name: `草图 (${n}) "${s}`, dim: true, done: true });
const ex = (n: string): Row => ({ d: 2, icons: ["eye", "extrude"], name: `拉伸 (${n})`, done: true });
const rows: Row[] = [
  { d: 1, icons: ["clock"], name: "历史记录建模模式", first: true },
  { d: 1, icons: ["view"], name: "模型视图", exp: "+" },
  { d: 1, icons: ["tick", "camera"], name: "摄像机", exp: "+" },
  { d: 1, icons: ["tick", "sheet"], name: "图纸", exp: "+" },
  { d: 1, icons: ["group"], name: "组", exp: "+" },
  { d: 1, icons: ["folder"], name: "非时间戳记几何体", exp: "+" },
  { d: 1, icons: ["ball", "history"], name: "模型历史记录", exp: "-", last: true, done: true },
  { d: 2, icons: ["eyeOff", "csys"], name: "基准坐标系 (0)", dim: true, done: true },
  sk("1"), ex("2"), sk("3"), ex("4"), sk("5"),
  { d: 2, icons: ["eye", "hole"], name: "Ø9 沉头孔 (6)", done: true },
  { d: 2, icons: ["eye", "pattern"], name: "阵列特征 [圆形] (7)", exp: "+", done: true },
  { d: 2, icons: ["eye", "hole"], name: "Ø52 沉头孔 (8)", done: true },
  sk("9"), ex("10"),
  { d: 2, icons: ["eyeOff", "plane"], name: "基准平面 (12)", dim: true, done: true },
  sk("13", "SKETCH_..."),
  { d: 2, icons: ["eye", "revolve"], name: "旋转 (14)", done: true },
  { d: 2, icons: ["eye", "subdiv"], name: "细分体 (15)", bold: true, last: true, done: true },
];

function Guide({ r }: { r: Row }) {
  const w = r.d === 1 ? 19 : 38;
  const x = r.d === 1 ? 9.5 : 28.5;
  return (
    <svg width={w} height="20" viewBox={`0 0 ${w} 20`} className="shrink-0" aria-hidden="true">
      <path d={`M${x} ${r.first ? 10 : 0}V${r.last ? 10 : 20}M${x} 10.5H${w - 1}`} stroke="#999" strokeDasharray="1 1" />
      {r.exp && <path d={`M${x - 4} 6.500h8v8h-8z`} fill="#fff" stroke="#ccc" />}
      {r.exp && <path d={`M${x - 2.5} 10.500h5${r.exp === "+" ? `M${x} 8v5` : ""}`} stroke="#222" />}
    </svg>
  );
}

function Navigator() {
  const all: (Row | null)[] = [...rows, ...Array(11).fill(null)];
  return (
    <section className="flex w-[323px] shrink-0 flex-col border-r border-[#a5a5a5] bg-white pr-[9px] pl-2">
      <div className="-ml-0.5 flex h-[27px] items-center pr-0.5 pb-px text-xs">
        <svg width="16" height="16" viewBox="0 0 24 24" fill="none">{bracket}</svg>
        <h2 className="ml-1 flex-1">部件导航器</h2>
        <button aria-label="最大化面板" className="h-[11px] w-3 border border-t-2 border-black" />
      </div>
      <div className="flex flex-1 flex-col overflow-hidden border border-[#d4d4d4]">
        <div className="h-0 flex-1 overflow-hidden">
          <table className="w-full table-fixed border-collapse text-xs">
            <colgroup><col /><col className="w-6" /><col className="w-6" /><col className="w-[60px]" /></colgroup>
            <thead>
              <tr className="h-[21px] bg-[#efefef] text-left leading-5 [&>th]:border-b [&>th]:border-[#d4d4d4] [&>th]:p-0 [&>th]:font-normal">
                <th><span className="flex items-center gap-[18px] pl-1.5">名称<svg width="9" height="5" viewBox="0 0 9 5"><path d="M0 5h9L4.500 0z" fill="#111" /></svg></span></th>
                <th className="border-l text-center">当</th>
                <th className="border-l text-center">最</th>
                <th className="border-l"><span className="pl-1.5">附注</span></th>
              </tr>
            </thead>
            <tbody>
              {all.map((r, i) => (
                <tr key={i} className={`h-5 [&>td]:h-5 [&>td]:border-b [&>td]:border-[#e8e8e8] [&>td]:p-0 ${i % 2 ? "bg-[#f9f9f9]" : "bg-white"}`}>
                  <td>
                    {r && (
                      <div className={`flex h-[19px] items-center overflow-hidden whitespace-nowrap ${r.dim ? "text-[#a8a8a8]" : "text-[#111]"} ${r.bold ? "font-bold" : ""}`}>
                        <Guide r={r} />
                        {r.icons.map((k) => <Svg key={k} s={16}>{art[k]}</Svg>)}
                        <span className="pl-[3px]">{r.name}</span>
                      </div>
                    )}
                  </td>
                  <td className="border-l">
                    {r?.bold && <span className="flex justify-center"><Svg s={16}><path d="M5 2v12M5 3h3M5 8h3M5 13h3" stroke="#333" /><path d="M8.500 1.500h4v3h-4zM8.500 11.500h4v3h-4z" fill="#fff" stroke="#333" /><path d="M8 6h5v4H8z" fill="#f0821e" /></Svg></span>}
                  </td>
                  <td className="border-l">{r?.done && <span className="flex justify-end pr-1"><Svg s={16}>{art.tick}</Svg></span>}</td>
                  <td className="border-l" />
                </tr>
              ))}
            </tbody>
          </table>
        </div>
        <div className="flex h-[17px] shrink-0 items-center bg-[#efefef] pr-[50px] pl-[17px]"><span className="h-0.5 flex-1 bg-[#858585]" /></div>
      </div>
      <div className="mt-0.5 h-1.5 border border-[#a5a5a5] bg-[#dadada]" />
      <div className="mb-[5px] pt-1 text-sm text-[#00648a]">
        {["搜索", "相关性", "细节", "预览"].map((t) => (
          <button key={t} className="flex h-6 w-full items-center border-b-2 border-[#d0d0d0] pt-px pl-2.5 text-left leading-[21px]">
            <svg width="5" height="9" viewBox="0 0 5 9"><path d="M0 0v9l4.500-4.500z" fill="#00648a" /></svg>
            <span className="pl-[9px]">{t}</span>
          </button>
        ))}
      </div>
    </section>
  );
}

/* ---------- dialog ---------- */

function Box({ title, children }: { title: string; children: ReactNode }) {
  return (
    <fieldset className="min-w-0 rounded-xs border border-[#d0d0d0] bg-white px-2 pb-2">
      <h3 className="mb-1.5">
        <button className="flex h-6 items-center gap-2 text-[13px] leading-6 font-bold text-[#00648a]">
          <svg width="7" height="4" viewBox="0 0 7 4"><path d="M0 0h7L3.500 4z" fill="#00648a" /></svg>
          {title}
        </button>
      </h3>
      <div className="overflow-hidden">{children}</div>
    </fieldset>
  );
}

function Radio({ name, label, on, cls }: { name: string; label: string; on?: boolean; cls: string }) {
  return (
    <label className={`flex shrink-0 items-center gap-1 whitespace-nowrap ${cls}`}>
      <input type="radio" name={name} defaultChecked={on} className="size-[13px] appearance-none rounded-full border border-[#666] bg-[#f3f3f3] checked:border-4 checked:border-[#005fb8] checked:bg-white" />
      {label}
    </label>
  );
}

function Check({ label, on }: { label: string; on?: boolean }) {
  return (
    <label className="flex h-[23px] items-center gap-1 whitespace-nowrap">
      <span className="grid size-[13px] place-items-center">
        <input type="checkbox" defaultChecked={on} className="col-start-1 row-start-1 size-[13px] appearance-none rounded-[3px] border border-[#666] bg-[#f3f3f3] checked:border-[#005fb8] checked:bg-[#005fb8]" />
        {on && <svg width="9" height="9" viewBox="0 0 9 9" className="pointer-events-none col-start-1 row-start-1"><path d="M1.500 4.500l2 2 4-4" stroke="#fff" fill="none" /></svg>}
      </span>
      {label}
    </label>
  );
}

function Btn({ children, cls }: { children: ReactNode; cls: string }) {
  return <button className={`h-[29px] shrink-0 border border-[#767676] bg-white text-center whitespace-nowrap ${cls}`}>{children}</button>;
}

const Star = () => (
  <svg width="14" height="14" viewBox="0 0 14 14" className="mr-[5px] ml-px shrink-0"><path d="M0 7h14M3.500 1l7 12M10.500 1l-7 12" stroke="#f5112e" strokeWidth="1.800" /></svg>
);

function PointRow({ label, on }: { label: string; on?: boolean }) {
  const tone = on ? "border-[#00648a] bg-[#bfdfe6]" : "border-[#767676] bg-white";
  return (
    <div className="mt-0.5 flex h-8 items-center">
      <Star />
      <span className="flex-1">{label}</span>
      <button aria-label="点构造器" className="mr-0.5 flex size-6 items-center justify-center border border-[#767676]">
        <Svg s={20}><circle cx="6" cy="5" r="2" fill="#f0821e" /><path d="M3 14h2v2H3zM9 14h2v2H9zM15 14h2v2h-2z" fill="#222" /></Svg>
      </button>
      <button aria-label="自动判断点" className={`flex h-8 w-8 items-center justify-center border ${tone}`}>
        <Svg><circle cx="5" cy="6" r="2.600" fill="#f0821e" stroke="#b35c10" strokeWidth=".7" /><path d="M15 8h7l-3 5h3l-11 10 4-8h-4z" fill="#ffc400" stroke="#6a5a20" strokeWidth=".9" /></Svg>
      </button>
      <button aria-label="点类型" className={`flex h-8 w-[17px] items-center justify-center border border-l-0 ${tone}`}><Caret /></button>
    </div>
  );
}

function XYZ({ sel }: { sel?: boolean }) {
  return (
    <div className="mt-0.5 flex h-[23px] items-center">
      {["X", "Y", "Z"].map((a) => (
        <label key={a} className="mr-[9px] flex shrink-0 items-center">
          <span className="w-4">{a}:</span>
          <span className="flex h-[23px] w-[82px] items-center border border-[#767676] px-[3px]">
            <input
              defaultValue="0. 00000"
              className={`h-[17px] w-full min-w-0 pl-[18px] font-['Liberation_Sans',sans-serif] text-base leading-[17px] outline-none ${sel && a === "X" ? "bg-[#0078d7] text-white" : ""}`}
            />
          </span>
        </label>
      ))}
    </div>
  );
}

function Precision({ label }: { label: string }) {
  return (
    <div className="flex h-[25px] items-center justify-between">
      <span>{label}</span>
      <SelectBox label={label} value="无" cls="h-[25px] w-[138px] pl-0.5" />
    </div>
  );
}

function Dialog() {
  return (
    <section className="flex w-[350px] shrink-0 flex-col border-r border-[#d9d9d9] bg-[#f0f0f0] text-xs text-[#111]">
      <div className="flex h-[26px] shrink-0 items-center bg-[#005f87] pr-2 pl-2 text-white">
        <Svg s={14}><circle cx="7" cy="7" r="4" stroke="#fff" strokeWidth="2" /><circle cx="7" cy="7" r="5.800" stroke="#fff" strokeWidth="2" strokeDasharray="2.300 2.250" /></Svg>
        <h2 className="flex-1 pl-2 text-sm whitespace-nowrap">点到点移动/复制（梅雷工具箱）</h2>
        <div className="flex items-center gap-2.5">
          <button aria-label="重置"><Svg s={12}><path d="M8 2a4.500 4.500 0 1 1-6 2" stroke="#fff" strokeWidth="1.800" /><path d="M0 2h5v4z" fill="#fff" /></Svg></button>
          <button aria-label="帮助" className="text-base leading-5 font-bold">?</button>
          <button aria-label="关闭"><Svg s={12}><path d="M1 1l10 10M11 1L1 11" stroke="#fff" strokeWidth="2" /></Svg></button>
        </div>
      </div>
      <div className="flex flex-1 pt-1">
        <div className="flex min-w-0 flex-1 flex-col gap-0.5 pt-[5px] pl-2.5">
          <Box title="方式">
            <div className="ml-0.5 flex gap-1.5">
              <button className="flex h-[58px] w-[148px] shrink-0 items-center justify-center gap-[23px] border border-[#767676] text-[15px] text-[#808080]">
                移动
                <svg width="36" height="36" viewBox="0 0 36 36"><path d="M18 5v26M5 18h26" stroke="#808080" strokeWidth="4" /><path d="M18 0l5.500 8h-11zM18 36l5.500-8h-11zM0 18l8-5.500v11zM36 18l-8-5.500v11z" fill="#808080" stroke="#e8b070" strokeWidth=".5" /></svg>
              </button>
              <button className="flex h-[59px] w-[155px] shrink-0 items-center gap-3 border border-[#767676] pl-[18px]">
                <span className="flex h-[30px] w-[50px] items-center justify-center bg-[#ffc300] text-base text-white">复制</span>
                <svg width="39" height="33" viewBox="0 0 39 33"><path d="M2 2h20v25H2zM2 9h20M2 15h20M2 21h20" fill="#fff" stroke="#ffc300" strokeWidth="3" /><path d="M17 7h20v24H17zM17 14h20M17 20h20M17 25h20" fill="#fff" stroke="#ffc300" strokeWidth="3" /></svg>
              </button>
            </div>
          </Box>
          <Box title="选择对象">
            <div className="h-[51px] rounded-xs border border-[#d0d0d0] pl-[5px]">
              <h4 className="pt-[3px] pl-1 leading-[18px] text-[#00648a]">过滤</h4>
              <div className="flex h-[26px] items-center">
                {["对象", "组", "实体", "线", "点"].map((t) => <Radio key={t} name="filter" label={t} on={t === "实体"} cls="w-[57px]" />)}
              </div>
            </div>
            <div className="mt-0.5 flex h-8 gap-0.5">
              <div className="flex flex-1 items-center bg-[#ffe07a]"><Star />选择移动对象 (0)</div>
              <button aria-label="选择对象" className="flex w-8 items-center justify-center border border-[#f5c020] bg-[#ffe07a]">
                <Svg s={20}><circle cx="10" cy="10" r="6" stroke="#333" /><path d="M10 0v20M0 10h20" stroke="#333" /></Svg>
              </button>
            </div>
          </Box>
          <Box title="锁定轴">
            <div className="flex h-[29px] items-center rounded-xs border border-[#d0d0d0] pl-[5px]">
              {["工作坐标", "绝对坐标", "指定坐标"].map((t) => <Radio key={t} name="axis" label={t} on={t === "工作坐标"} cls="w-[81px]" />)}
            </div>
            <div className="mt-px grid h-[68px] grid-cols-[106px_1fr] pl-px">
              <div>{["X", "Y", "Z"].map((a) => <Check key={a} label={`${a}方向锁定不变`} />)}</div>
              <div>
                <Check label="每次都清除勾选" on />
                <div className="flex gap-0.5 pt-px">
                  <button className="h-11 w-28 border border-[#767676]">清除勾选</button>
                  <button disabled className="h-11 flex-1 border border-[#c4c4c4] text-[#b4b4b4]">后退一步</button>
                </div>
              </div>
            </div>
          </Box>
          <Box title="起始点">
            <Precision label="起始点位置精度" />
            <PointRow label="起始点" on />
            <div className="mt-0.5 flex gap-0.5"><Btn cls="w-[74px]">顶部中心</Btn><Btn cls="w-[66px]">3D中心</Btn><Btn cls="w-[74px]">底部中心</Btn><Btn cls="w-[62px]">面中心</Btn></div>
            <XYZ sel />
          </Box>
          <Box title="结束点">
            <Precision label="结束点位置精度" />
            <PointRow label="指定点" />
            <div className="mt-0.5 flex gap-0.5"><Btn cls="w-[77px]">WCS原点</Btn><Btn cls="w-[73px]">ABS原点</Btn><Btn cls="w-[74px]">对象中心</Btn><Btn cls="w-[62px]">面中心</Btn></div>
            <div className="mt-0.5 flex gap-0.5"><Btn cls="w-[77px]">X0点</Btn><Btn cls="w-[73px]">Y0点</Btn><Btn cls="w-[74px]">Z0点</Btn></div>
            <XYZ />
          </Box>
        </div>
        <div className="ml-1 flex w-[22px] shrink-0 justify-start border-l border-white pt-[17px] pb-11 pl-[7px]"><span className="w-0.5 bg-[#858585]" /></div>
      </div>
      <div className="flex flex-col">
        <button aria-label="收起" className="flex h-3 items-center justify-center"><svg width="9" height="5" viewBox="0 0 9 5"><path d="M0 5h9L4.500 0z" fill="#111" /></svg></button>
        <hr className="mx-1.5 border-[#d0d0d0]" />
        <div className="mt-2 mb-[11px] flex justify-end gap-[5px] pr-[15px]">
          <button disabled className="h-[25px] w-[54px] border border-[#c4c4c4] text-[#b4b4b4]">确定</button>
          <button disabled className="h-[25px] w-[54px] border border-[#c4c4c4] text-[#b4b4b4]">应用</button>
          <button className="h-[25px] w-[54px] border border-[#005f87] text-[#005f87]">取消</button>
        </div>
      </div>
    </section>
  );
}

/* ---------- 3D model ---------- */

function Flange() {
  const edge = { stroke: "#2b2b2b", strokeWidth: 2.5, fill: "none" };
  const cut = { fill: "#a9cf84", stroke: "#ccff99", strokeWidth: 6, strokeLinejoin: "round" as const };
  return (
    <svg width="260" height="500" viewBox="0 0 780 1500" fill="none" role="img" aria-label="法兰剖视模型">
      <defs>
        <linearGradient id="ring" x1="0" y1="380" x2="0" y2="1140" gradientUnits="userSpaceOnUse">
          <stop offset="0" stopColor="#7a4800" /><stop offset=".3" stopColor="#9a5c00" /><stop offset=".5" stopColor="#e68a00" /><stop offset=".7" stopColor="#ffc020" /><stop offset=".85" stopColor="#ffa60a" /><stop offset="1" stopColor="#ff9d00" />
        </linearGradient>
        <linearGradient id="ring2" x1="0" y1="515" x2="0" y2="1000" gradientUnits="userSpaceOnUse">
          <stop offset="0" stopColor="#804a00" /><stop offset=".3" stopColor="#a86400" /><stop offset=".5" stopColor="#f59400" /><stop offset=".7" stopColor="#ffc020" /><stop offset="1" stopColor="#ff9800" />
        </linearGradient>
        <linearGradient id="bore" x1="0" y1="0" x2="0" y2="1">
          <stop offset="0" stopColor="#7a4800" /><stop offset=".3" stopColor="#a06000" /><stop offset=".6" stopColor="#ffa000" /><stop offset=".8" stopColor="#ffc41c" /><stop offset="1" stopColor="#f79a00" />
        </linearGradient>
        <linearGradient id="hub" x1="0" y1="530" x2="0" y2="1080" gradientUnits="userSpaceOnUse">
          <stop offset="0" stopColor="#d88200" /><stop offset=".6" stopColor="#f08e00" /><stop offset="1" stopColor="#ff9900" />
        </linearGradient>
      </defs>
      <path d="M184 104Q240 55 320 58L430 78C560 80 660 300 663 590C665 900 560 1250 372 1424L243 1405L240 1315C262 1290 260 1260 250 1240L236 1240L232 1145L122 1130L122 1085C150 1060 180 1020 203 975C262 870 280 780 278 660C274 580 258 520 236 516Q220 517 208 530L178 528L172 403L88 390L90 348Q130 315 190 323L193 277Q212 250 207 203L187 195Z" fill="#e68a00" stroke="#2b2b2b" strokeWidth="2.500" />
      <path d="M184 104Q240 55 320 58L430 78Q370 82 313 125Z" fill="#f49200" />
      <path d="M313 125Q370 80 430 78M320 58L430 78" {...edge} />
      <path d="M372 84C430 110 500 250 525 420S545 700 515 850S450 1100 415 1165" stroke="#b9a070" strokeWidth="1.500" strokeDasharray="3 16" />

      <path d="M385 380C460 385 525 520 523 680C520 870 440 1080 360 1143L335 1138C430 1050 498 850 498 650C498 540 460 420 395 380Z" fill="url(#ring)" />
      <path d="M322 407Q350 380 385 380C460 385 525 520 523 680C520 870 440 1080 360 1143M395 380C460 420 498 540 498 650C498 850 430 1050 335 1138" {...edge} />

      <path d="M303 548Q325 530 345 531C390 535 428 620 427 700C425 830 385 960 325 997L300 997L290 1075L250 1068L228 980C285 930 325 830 328 690C330 620 318 575 290 545Z" fill="url(#hub)" />
      <path d="M345 531C390 535 428 620 427 700C425 830 385 960 325 997L318 975C370 920 403 820 405 700C405 640 385 560 345 531Z" fill="url(#ring2)" />
      <path d="M388 590C398 700 370 860 325 970C372 900 403 820 405 700Q402 630 388 590Z" fill="url(#ring2)" />
      <path d="M303 548Q325 530 345 531C390 535 428 620 427 700C425 830 385 960 325 997M350 533C385 560 405 640 405 700C403 820 370 920 318 975M388 590C398 700 370 860 325 970" {...edge} />

      <path d="M236 516C300 530 330 620 328 690C325 830 285 930 230 980L203 975C262 870 280 780 278 660C274 580 258 520 236 516Z" fill="url(#ring2)" />
      <path d="M260 522C310 550 330 620 328 690C325 830 285 930 230 980M245 518C290 560 300 620 302 690C298 820 250 930 210 975" {...edge} />
      <path d="M228 980Q250 1030 250 1070L290 1075Q300 1060 303 990Q270 1060 250 1068" fill="#ff9900" />
      <path d="M303 995Q285 1050 250 1068" {...edge} />
      <path d="M216 452L262 455L285 545Q240 505 208 530Z" fill="#d98200" />
      <path d="M208 530Q222 515 240 515L282 545" {...edge} />
      <path d="M122 1085Q165 1050 203 980L203 1097Z" fill="#ffa000" />
      <path d="M90 348Q130 315 190 323L193 362Z" fill="#f09000" />

      <path d="M240 190L330 185Q348 195 347 240Q342 300 320 320L245 308L242 283L193 275Q212 250 207 203Z" fill="url(#bore)" />
      <path d="M207 203Q212 250 193 275M250 203Q265 220 261 245Q255 275 242 283M270 188Q278 215 270 255Q262 290 245 306M325 186Q348 195 347 240Q342 300 320 320" {...edge} />
      <path d="M290 1230L370 1227Q395 1240 395 1285Q390 1340 368 1360L296 1345L292 1323L242 1315Q260 1290 256 1243Z" fill="url(#bore)" />
      <path d="M256 1243Q260 1290 242 1315M298 1243Q312 1262 308 1285Q304 1315 292 1323M318 1230Q326 1262 318 1300Q308 1335 296 1345M370 1227Q396 1240 395 1285Q390 1340 368 1360" {...edge} />

      <ellipse cx="551" cy="341" rx="31" ry="71" transform="rotate(7 551 341)" fill="url(#bore)" stroke="#2b2b2b" strokeWidth="2.500" />
      <ellipse cx="575" cy="861" rx="31" ry="71" transform="rotate(7 575 861)" fill="url(#bore)" stroke="#2b2b2b" strokeWidth="2.500" />

      <path d="M184 105L311 125L313 190L240 180L238 205L187 197Z" {...cut} />
      <path d="M193 275L241 283L245 309L320 320L322 407L298 407L303 548L285 545L262 455L218 449L207 530L180 526L174 404L90 391L90 348L195 364Z" {...cut} />
      <path d="M200 978L228 981L249 1070L290 1076L303 994L325 996L330 1140L358 1145L360 1230L289 1221L287 1243L238 1237L232 1144L123 1130L123 1086L203 1097Z" {...cut} />
      <path d="M240 1317L292 1324L296 1349L368 1360L369 1424L245 1407Z" {...cut} />
      <path d="M225 350Q270 330 310 345M245 375Q280 420 280 470" stroke="#9a8a5a" strokeWidth="1.500" strokeDasharray="3 7" />
      <path d="M135 1116L155 1101M245 1403L288 1366M262 1116L272 1104" stroke="#7a8a5a" strokeWidth="1.500" />

      <path d="M206 598L216 640L213 745L200 645Z" fill="#0a34c8" />
      <path d="M291 697L270 725L219 752L250 715Z" fill="#2c9a3a" />
      <path d="M226 759L300 762L362 778L320 783Z" fill="#d4222a" />
      <g fontSize="40" fontFamily="'Liberation Sans', sans-serif">
        <text x="220" y="596" fill="#3a62e8">ZC</text>
        <text x="235" y="688" fill="#4aa85a">YC</text>
        <text x="312" y="824" fill="#d8484a">XC</text>
      </g>
    </svg>
  );
}

function Workspace() {
  return (
    <section className="flex min-w-0 flex-1 flex-col">
      <div className="flex h-[25px] shrink-0">
        <a href="#part" className="flex w-[150px] items-center bg-[#005f87] pl-[7px] text-xs whitespace-nowrap text-white">
          <svg width="15" height="15" viewBox="0 0 24 24" fill="none">{bracket}</svg>
          <span className="flex-1 pl-1">旋转202478.prt</span>
          <Svg s={12}><path d="M8 4V1H1v10h7V9" stroke="#fff" strokeWidth="1.500" /><path d="M4 7l6-1-2-2M10 6L8 9" stroke="#fff" strokeWidth="1.300" /></Svg>
          <span className="mr-1.5 ml-1.5"><Svg s={9}><path d="M1 1l7 7M8 1L1 8" stroke="#e6e6e6" strokeWidth="1.800" /></Svg></span>
        </a>
      </div>
      <div className="flex flex-1">
        <Dialog />
        <div className="flex-1 overflow-hidden border-t-2 border-[#005f87] bg-white pt-[165px] pl-[110px]">
          <Flange />
        </div>
      </div>
    </section>
  );
}

/* ---------- input method bar ---------- */

function ImeBar() {
  const b = "#0a6fd6";
  return (
    <div className="absolute bottom-0 left-[1155px] flex h-[25px] w-[226px] items-center justify-between border-t border-r border-[#aac6e6] bg-white pr-1 font-['Noto_Sans_CJK_SC',sans-serif]">
      <svg width="30" height="30" viewBox="0 0 32 30" fill="none" className="-mt-1.5"><path d="M1 5L24 1q2 0 3 3l4 19q0 3-3 3L8 30q-3 0-4-3z" fill="#f4511e" /><path d="M22 8c-4-2-11-1-11 3s11 3 11 7-8 5-13 3" stroke="#fff" strokeWidth="4" /></svg>
      <span className="text-sm leading-4 font-bold text-[#0a6fd6]">英</span>
      <Svg s={14}><circle cx="4" cy="5" r="2" fill={b} /><path d="M10 8h3q0 4-3 5" fill={b} /></Svg>
      <Svg s={16}><rect x="5" y="0" width="6" height="10" rx="3" fill={b} /><path d="M3 7c0 7 10 7 10 0M8 12v4" stroke={b} strokeWidth="1.500" /></Svg>
      <Svg s={16}><rect x="1" y="3" width="14" height="11" rx="1" stroke={b} strokeWidth="1.500" /><path d="M3 6.500h10M3 9.500h10M5.500 5v6M8 5v6M10.500 5v6M5 12.500h6" stroke={b} /></Svg>
      <Svg s={17}><path d="M1 5l4-2q3 3 6 0l4 2-2 4-1-1v8H4V8L3 9z" fill="#a98af0" /><path d="M1 5l4-2 3 2-4 3-1 1z" fill="#f0765a" /><circle cx="14" cy="2.500" r="2.500" fill="#ff5030" /></Svg>
      <Svg s={16}><path d="M2 8q0-5.500 6-5.500T14 8l1 6-3-2H4l-3 2z" stroke={b} strokeWidth="1.800" /><path d="M3.500 8h4M5.500 6v4" stroke={b} strokeWidth="1.300" /><circle cx="10.500" cy="8" r="1.500" fill={b} /></Svg>
      <Svg s={16}><path d="M2 2h5v5H2zM9 2h5v5H9zM2 9h5v5H2zM9 9h5v5H9z" fill={b} /></Svg>
      <Svg s={16}><circle cx="8" cy="8" r="5.500" stroke={b} strokeWidth="3" strokeDasharray="3.800 1.900" /><circle cx="8" cy="8" r="4.500" fill="#fff" stroke={b} strokeWidth="1.500" /><path d="M8 5v8" stroke={b} strokeWidth="2" /></Svg>
    </div>
  );
}

export default function App() {
  return (
    <div className="relative flex h-screen flex-col overflow-hidden bg-white font-['Noto_Sans','Noto_Sans_CJK_SC',sans-serif] text-[#111]">
      <svg className="absolute size-0" aria-hidden="true">
        <defs>
          <linearGradient id="gradBg" x1="0" y1="0" x2="0" y2="1"><stop offset="0" stopColor="#9fc3de" /><stop offset="1" stopColor="#e4e4e4" /></linearGradient>
          <linearGradient id="gradPlane" x1="0" y1="0" x2="1" y2="1"><stop offset="0" stopColor="#c2dcd2" /><stop offset="1" stopColor="#f4f6f2" /></linearGradient>
          <radialGradient id="ballG" cx=".35" cy=".3" r=".8"><stop offset="0" stopColor="#b8ffb8" /><stop offset=".5" stopColor="#2fe03a" /><stop offset="1" stopColor="#18a826" /></radialGradient>
        </defs>
      </svg>
      <Header />
      <Ribbon />
      <SelectionBar />
      <main className="flex min-h-0 flex-1 border-b border-[#a5a5a5]">
        <Rail />
        <Navigator />
        <Workspace />
      </main>
      <footer className="h-5 shrink-0 bg-white" />
      <ImeBar />
      <div className="pointer-events-none absolute right-1 bottom-3 font-['Noto_Sans_CJK_SC',sans-serif] text-[38px] leading-[46px] font-light whitespace-nowrap text-[#e2e2e2] [text-shadow:1px_1px_1px_#888]">CSDN @山涧果子</div>
    </div>
  );
}
